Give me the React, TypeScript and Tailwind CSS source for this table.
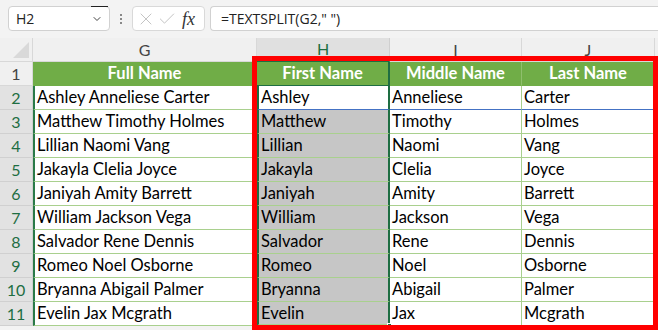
import React from 'react';
import { ChevronDown, X, Check } from 'lucide-react';

const rows = [
  ['Ashley Anneliese Carter', 'Ashley', 'Anneliese', 'Carter'],
  ['Matthew Timothy Holmes', 'Matthew', 'Timothy', 'Holmes'],
  ['Lillian Naomi Vang', 'Lillian', 'Naomi', 'Vang'],
  ['Jakayla Clelia Joyce', 'Jakayla', 'Clelia', 'Joyce'],
  ['Janiyah Amity Barrett', 'Janiyah', 'Amity', 'Barrett'],
  ['William Jackson Vega', 'William', 'Jackson', 'Vega'],
  ['Salvador Rene Dennis', 'Salvador', 'Rene', 'Dennis'],
  ['Romeo Noel Osborne', 'Romeo', 'Noel', 'Osborne'],
  ['Bryanna Abigail Palmer', 'Bryanna', 'Abigail', 'Palmer'],
  ['Evelin Jax Mcgrath', 'Evelin', 'Jax', 'Mcgrath'],
];

const headers = ['Full Name', 'First Name', 'Middle Name', 'Last Name'];

const cellFont = { fontFamily: 'Lato, "Noto Sans", sans-serif' };
const uiFont = { fontFamily: '"Open Sans", "Noto Sans", sans-serif' };

const App: React.FC = () => {
  return (
    <div className="w-[658px] h-[330px] overflow-hidden bg-[#f3f3f3] relative">
      {/* formula bar */}
      <div className="h-[38px] flex items-start pt-[6px] pl-[8px]" style={uiFont}>
        <div className="relative w-[102px] h-[25px] bg-white border border-[#d1d1d1] rounded-[4px] flex items-center pl-[7px] text-[14px] text-[#222]">
          H2
          <div className="absolute right-[1px] top-[-1px] w-[17px] h-[1px] bg-[#222]" />
          <ChevronDown className="absolute right-[6px] top-[6px] w-[12px] h-[12px] text-[#444]" strokeWidth={2} />
        </div>
        <div className="w-[22px] h-[25px] flex flex-col items-center justify-center gap-[2px]">
          <div className="w-[2px] h-[2px] bg-[#888]" />
          <div className="w-[2px] h-[2px] bg-[#888]" />
          <div className="w-[2px] h-[2px] bg-[#888]" />
        </div>
        <div className="w-[73px] h-[25px] bg-white border border-[#d9d9d9] rounded-[4px] flex items-center pl-[3px] gap-[1px]">
          <X className="w-[20px] h-[20px] text-[#c4c4c4]" strokeWidth={1.2} />
          <Check className="w-[20px] h-[20px] text-[#c4c4c4]" strokeWidth={1.2} />
          <span className="ml-[4px] text-[18px] italic text-[#333] leading-none" style={{ fontFamily: '"Liberation Serif", serif' }}>fx</span>
        </div>
        <div className="ml-[5px] flex-1 h-[25px] bg-white border border-[#d1d1d1] border-r-0 rounded-l-[4px] flex items-center pl-[10px] text-[14px] text-[#222]">
          =TEXTSPLIT(G2," ")
        </div>
      </div>

      {/* sheet */}
      <div className="grid grid-cols-[33px_224px_133px_132px_133px_3px] grid-rows-[24px_repeat(11,24px)]" style={cellFont}>
        {/* column header row */}
        <div className="relative bg-[#f0f0f0] border-r border-b border-[#d8d8d8]">
          <div className="absolute right-[3px] bottom-[3px] w-0 h-0 border-l-[16px] border-l-transparent border-b-[16px] border-b-[#d9d9d9]" />
        </div>
        <div className="bg-[#f0f0f0] border-r border-b border-[#d8d8d8] flex items-center justify-center text-[16px] text-[#444]">G</div>
        <div className="bg-[#e0e0e0] border-r border-b-2 border-b-[#1e6e42] border-r-[#cfcfcf] flex items-center justify-center text-[16px] text-[#1e6e42]">H</div>
        <div className="bg-[#f0f0f0] border-r border-b border-[#d8d8d8] flex items-center justify-center text-[16px] text-[#444]">I</div>
        <div className="bg-[#f0f0f0] border-r border-b border-[#d8d8d8] flex items-center justify-center text-[16px] text-[#444]">J</div>
        <div className="bg-[#f0f0f0] border-b border-[#d8d8d8]" />

        {/* row 1 */}
        <div className="bg-[#f0f0f0] border-r border-b border-[#d8d8d8] flex items-center justify-center text-[16px] text-[#444]">1</div>
        {headers.map((h, i) => (
          <div
            key={h}
            className={`bg-[#70ad47] border-b flex items-center justify-center text-[16.5px] font-bold text-white ${
              i === 1 ? 'border-b-[#1e6e42] border-r-2 border-r-[#1e6e42]' : 'border-b-[#70ad47] border-r border-r-[#8fbf6d]'
            }`}
          >
            {h}
          </div>
        ))}
        <div className="bg-[#f3f3f3]" />

        {rows.map((r, ri) => (
          <React.Fragment key={ri}>
            <div className="bg-[#e2e2e2] border-r border-b border-[#d0d0d0] flex items-center justify-center text-[16px] text-[#1e6e42]">
              {ri + 2}
            </div>
            <div className="bg-white border-l-2 border-l-[#2a7a48] border-r border-r-[#a9d08e] border-b border-b-[#a9d08e] flex items-center pl-[2px] text-[16.5px] text-black">
              {r[0]}
            </div>
            <div
              className={`relative border-r-2 border-r-[#1e6e42] border-l-2 border-l-[#1e6e42] flex items-center pl-[2px] text-[16.5px] text-black ${
                ri === 0 ? 'bg-white border-b border-b-[#4472c4]' : 'bg-[#c6c6c6] border-b border-b-[#a9d08e]'
              } ${ri === 9 ? 'border-b-2 border-b-[#1e6e42]' : ''}`}
            >
              {r[1]}
              {ri === 9 && <div className="absolute right-[-4px] bottom-[-4px] w-[5px] h-[5px] bg-[#1e6e42] border border-white" />}
            </div>
            <div className={`bg-white border-r border-r-[#a9d08e] border-b flex items-center pl-[2px] text-[16.5px] text-black ${ri === 0 ? 'border-b-[#4472c4]' : 'border-b-[#a9d08e]'}`}>
              {r[2]}
            </div>
            <div className={`bg-white border-r border-r-[#4472c4] border-b flex items-center pl-[2px] text-[16.5px] text-black ${ri === 0 ? 'border-b-[#4472c4]' : 'border-b-[#a9d08e]'}`}>
              {r[3]}
            </div>
            <div className="bg-white" />
          </React.Fragment>
        ))}
      </div>

      {/* red highlight box */}
      <div className="absolute left-[252px] top-[56px] w-[406px] h-[274px] border-[5px] border-[#ff0000] pointer-events-none" />
    </div>
  );
};

export default App;
